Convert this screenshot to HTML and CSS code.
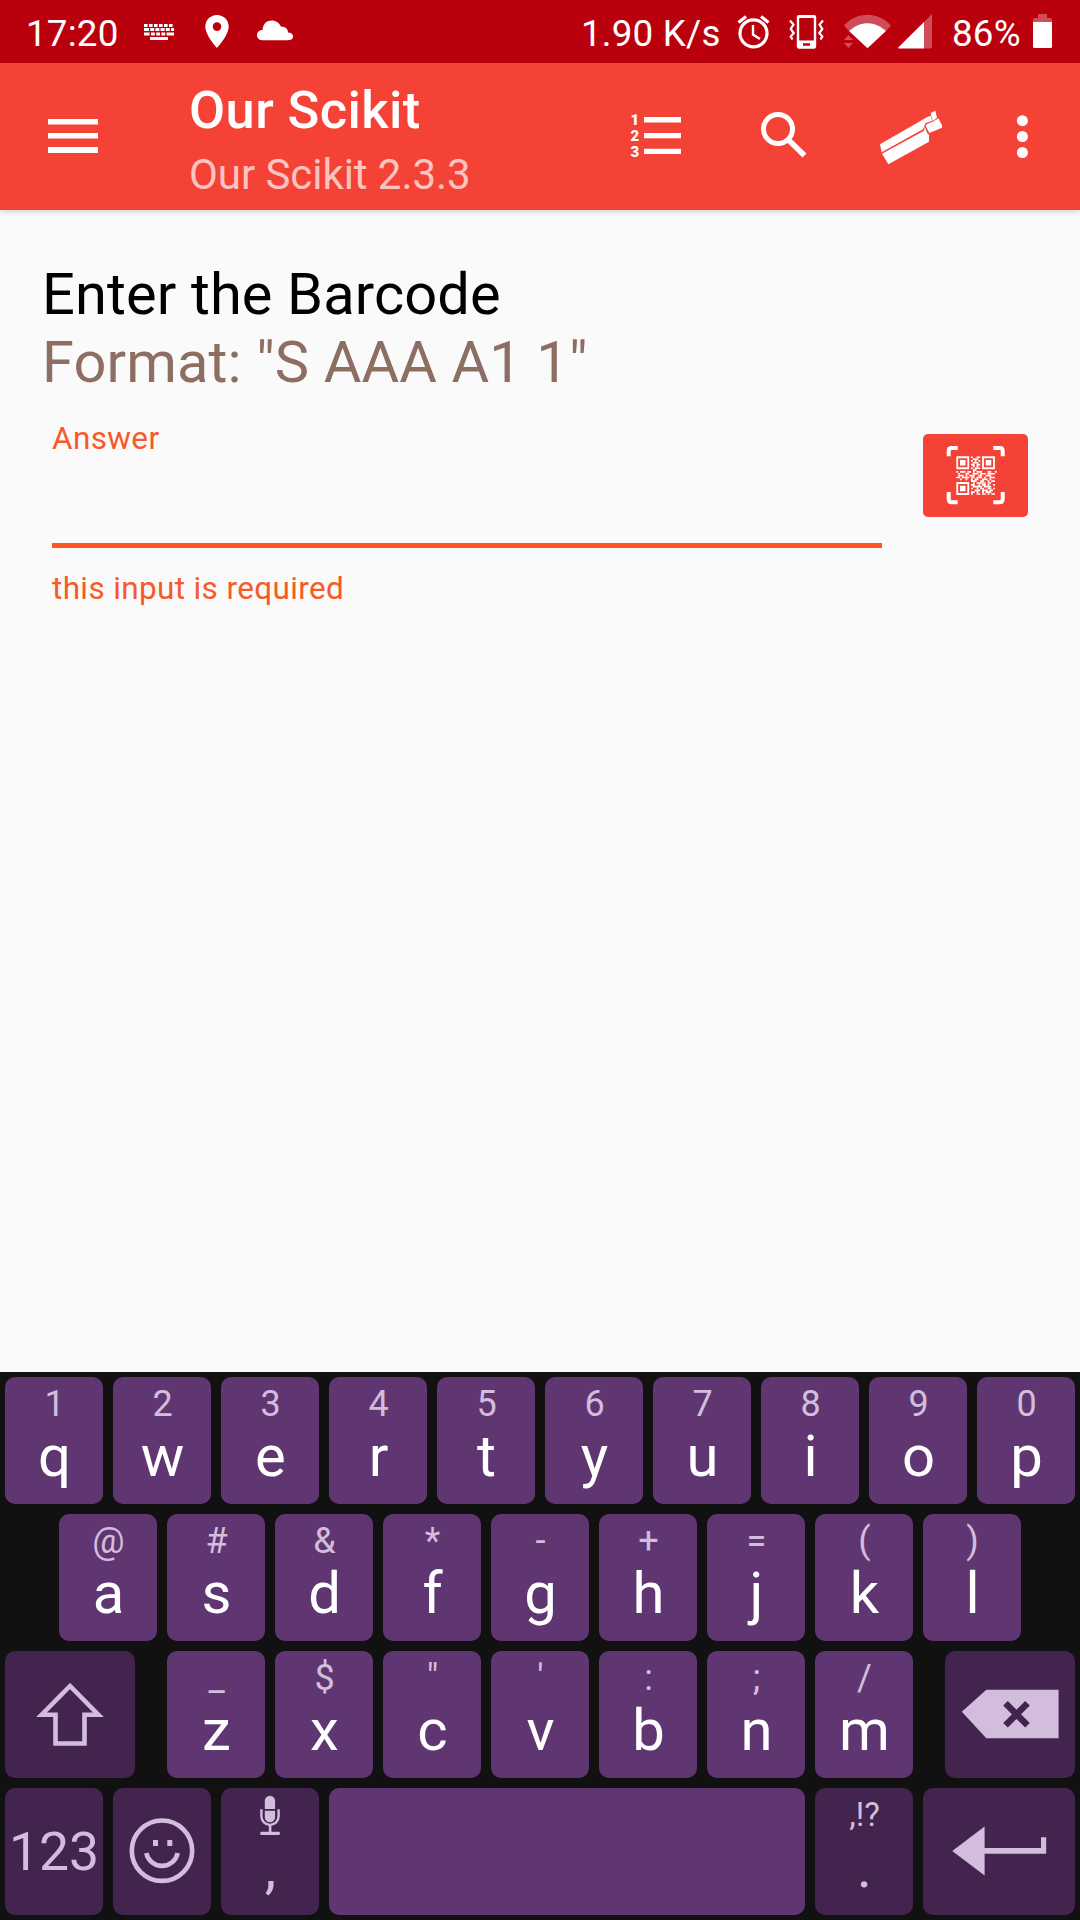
FILE: index.html
```html
<!DOCTYPE html>
<html lang="en">
<head>
<meta charset="utf-8">
<title>Our Scikit</title>
<link rel="stylesheet" href="styles.css">
</head>
<body>
<header class="status-bar">
  <div class="status-group">
    <span class="status-text clock">17:20</span>
    <svg class="ic-keyboard" width="30" height="63" viewBox="144 0 30 63"><path stroke="#fff" stroke-width="3" stroke-dasharray="3.6 1.4" d="M144 25.5h30"/><path stroke="#fff" stroke-width="3" stroke-dasharray="5 1.2 4 1.2 4 1.2 4 1.2 4 1.2 5" d="M144 29.6h30"/><path stroke="#fff" stroke-width="3" stroke-dasharray="5.6 1.4 3.8 1.4 3.8 1.4 3.8 1.4 9" d="M144 34h30"/><path fill="#fff" d="M150 37h18v3h-18z"/></svg>
    <svg class="ic-pin" width="24" height="63" viewBox="205 0 24 63"><path fill="#fff" fill-rule="evenodd" d="M217 15c-6.600 0-11.700 5.100-11.700 11.600C205.300 35.500 217 48 217 48s11.700-12.500 11.700-21.400C228.700 20.100 223.600 15 217 15zm0 7.300a4.300 4.300 0 1 1 0 8.600 4.300 4.300 0 0 1 0-8.600z"/></svg>
    <svg class="ic-cloud" width="36" height="63" viewBox="257 0 36 63"><path fill="#fff" d="M262.500 40.300c-7.600-.5-7.400-10 .2-10.500 0-11 14.500-12.600 18.300-3 4-.5 7 2 7 5.700 7 .4 6.800 7.800-.5 7.800z"/></svg>
  </div>
  <div class="status-group">
    <span class="status-text speed">1.90 K/s</span>
    <svg class="ic-alarm" width="33" height="63" viewBox="737 0 33 63"><g fill="none" stroke="#fff" stroke-width="3.200"><circle cx="753.500" cy="33.300" r="13.500"/><path d="M738.500 22.500l7.500-6M768.500 22.500l-7.500-6"/><path stroke-width="2.400" d="M753 25v9.500l7 4.500"/></g></svg>
    <svg class="ic-vibrate" width="35" height="63" viewBox="789 0 35 63"><path fill="#fff" fill-rule="evenodd" d="M799 15h15q2.200 0 2.200 2.200v29.300q0 2.200-2.200 2.200h-15q-2.200 0-2.200-2.200V17.200Q796.800 15 799 15zm.2 3v22.500h14.600V18zm3.800 25.300v2.400h7v-2.400z"/><path fill="none" stroke="#fff" stroke-width="2.200" d="M790 20.500l3.500 4-2.800 4.500 3 4-3 3.500 1.800 3M823 20.500l-3.500 4 2.800 4.500-3 4 3 3.500-1.800 3"/></svg>
    <svg class="ic-wifi" width="47" height="63" viewBox="844 0 47 63"><path class="dim" d="M844 25.500c13-14.300 34-14.300 47 0l-4.800 5.500c-11-10.500-26.400-10.500-37.400 0zM844 40l4.500-5 4.500 5zM844 43h9l-4.500 5z"/><path fill="#fff" d="M849 31c11-10.500 26-10.500 37 0l-18.500 17.300z"/></svg>
    <svg class="ic-signal" width="34" height="63" viewBox="898 0 34 63"><path class="dim" d="M924 22l8-8v32.500q0 2-2 2h-6z"/><path fill="#fff" d="M924 22v26.500h-25q-1.500 0-.5-1.200z"/></svg>
    <span class="status-text percent">86%</span>
    <svg class="ic-battery" width="19" height="63" viewBox="1033 0 19 63"><path class="dim" d="M1033 22v-2q0-2 2-2h3v-4h9v4h3q2 0 2 2v2z"/><path fill="#fff" d="M1033 22h19v24.500q0 1.500-1.500 1.500h-16q-1.500 0-1.500-1.500z"/></svg>
  </div>
</header>

<div class="app-bar">
  <svg class="menu" width="50" height="34" viewBox="0 0 50 34"><path fill="#fff" d="M0 0h50v5.500H0zM0 14h50v5.500H0zM0 28h50v6H0z"/></svg>
  <div class="titles">
    <div class="title">Our Scikit</div>
    <div class="subtitle">Our Scikit 2.3.3</div>
  </div>
  <div class="actions">
    <svg class="list" width="52" height="48" viewBox="630 112 52 48"><path fill="#fff" d="M644 117h37v5.500h-37zM644 133h37v5.300h-37zM644 148.700h37v5.300h-37z"/><g class="list-digits"><text x="630.500" y="125">1</text><text x="630.500" y="141">2</text><text x="630.500" y="157">3</text></g></svg>
    <svg class="search" width="48" height="48" viewBox="760 111 48 48"><g fill="none" stroke="#fff"><circle cx="778" cy="129" r="14.500" stroke-width="5"/><path stroke-width="5.500" d="M787.500 139l17 16.500"/></g></svg>
    <svg class="torch" width="90" height="64" viewBox="0 0 270 192"><g fill="#fff"><path d="M30 121L172 39l11-4 3 16-19 6-8 19L35 145z"/><path d="M36 149L162 80l2-12 8 20 5 5v20L55 181z"/><path d="M171 60l17-7 18-10 10 21v7l-38 16-11-21z"/><path d="M182 27l14-7 5 22-13 9z"/></g><path fill="none" stroke="#f44336" stroke-width="3" d="M203 34l12 24"/></svg>
    <svg class="more" width="12" height="48" viewBox="0 0 12 48"><g fill="#fff"><circle cx="6.400" cy="8.700" r="5.500"/><circle cx="6.400" cy="24.500" r="5.500"/><circle cx="6.400" cy="40.500" r="5.500"/></g></svg>
  </div>
</div>

<main class="content">
  <div class="prompt">Enter the Barcode</div>
  <div class="prompt format">Format: "S AAA A1 1"</div>
  <div class="answer-row">
    <div class="field">
      <div class="field-text">Answer</div>
      <div class="field-input"></div>
      <div class="field-text">this input is required</div>
    </div>
    <div class="scan">
      <svg width="105" height="83" viewBox="923 434 105 83">
        <path fill="none" stroke="#fff" stroke-width="4" d="M948.700 456.300V451q0-3 3-3h6M993.300 448h6.400q3 0 3 3v5.300M948.700 492v7.300q0 3 3 3h6M993.300 502.300h6.400q3 0 3-3V492"/>
        <g transform="translate(956.300 456.300) scale(1.840)" fill="none" stroke="#fff">
          <path stroke-width="1" d="M.5.500h6v6h-6zM14.500.500h6v6h-6zM.5 14.500h6v6h-6z"/>
          <path fill="#fff" stroke="none" d="M2 2h3v3H2zM16 2h3v3h-3zM2 16h3v3H2z"/>
          <path stroke-width=".9" d="M8 .5h1m2 0h2M9 1.500h3M8 2.500h1m1 0h1m1 0h1M9 3.500h3M8 4.500h2m1 0h2M9 5.500h1m1 0h1M8 6.500h1m1 0h3M9 7.500h2M0 8.500h1m1 0h3m1 0h2m1 0h1m1 0h3m3 0h2m2 0h1M1 9.500h1m3 0h2m2 0h3m1 0h3m1 0h4M1 10.500h3m1 0h1m1 0h3m2 0h2m2 0h3M0 11.500h2m1 0h4m1 0h2m1 0h3m1 0h1m2 0h3M2 12.500h1m2 0h1m2 0h1m1 0h2m2 0h3m1 0h1M8 13.500h3m2 0h2m2 0h1m1 0h2M9 14.500h1m1 0h5m1 0h2M8 15.500h2m2 0h1m1 0h2m1 0h1m2 0h1M9 16.500h5m1 0h4M8 17.500h1m2 0h1m1 0h2m2 0h2m1 0h1M10 18.500h3m1 0h3m1 0h2M8 19.500h2m1 0h1m2 0h1m1 0h3M8 20.500h1m2 0h2m1 0h2m1 0h1m1 0h2"/>
        </g>
      </svg>
    </div>
  </div>
</main>

<section class="keyboard">
  <div class="row">
    <div class="key"><span class="hint">1</span><span class="main">q</span></div>
    <div class="key"><span class="hint">2</span><span class="main">w</span></div>
    <div class="key"><span class="hint">3</span><span class="main">e</span></div>
    <div class="key"><span class="hint">4</span><span class="main">r</span></div>
    <div class="key"><span class="hint">5</span><span class="main">t</span></div>
    <div class="key"><span class="hint">6</span><span class="main">y</span></div>
    <div class="key"><span class="hint">7</span><span class="main">u</span></div>
    <div class="key"><span class="hint">8</span><span class="main">i</span></div>
    <div class="key"><span class="hint">9</span><span class="main">o</span></div>
    <div class="key"><span class="hint">0</span><span class="main">p</span></div>
  </div>
  <div class="row">
    <div class="key"><span class="hint">@</span><span class="main">a</span></div>
    <div class="key"><span class="hint">#</span><span class="main">s</span></div>
    <div class="key"><span class="hint">&amp;</span><span class="main">d</span></div>
    <div class="key"><span class="hint">*</span><span class="main">f</span></div>
    <div class="key"><span class="hint">-</span><span class="main">g</span></div>
    <div class="key"><span class="hint">+</span><span class="main">h</span></div>
    <div class="key"><span class="hint">=</span><span class="main">j</span></div>
    <div class="key"><span class="hint">(</span><span class="main">k</span></div>
    <div class="key"><span class="hint">)</span><span class="main">l</span></div>
  </div>
  <div class="row spread">
    <div class="key dark shift"><svg width="130" height="127" viewBox="5 1651 130 127"><path fill="none" stroke="#d2bddc" stroke-width="4.600" d="M70 1686l-28.300 28.700h13.800v28.800h29v-28.800h13.800z"/></svg></div>
    <div class="letters">
      <div class="key"><span class="hint">_</span><span class="main">z</span></div>
      <div class="key"><span class="hint">$</span><span class="main">x</span></div>
      <div class="key"><span class="hint">"</span><span class="main">c</span></div>
      <div class="key"><span class="hint">'</span><span class="main">v</span></div>
      <div class="key"><span class="hint">:</span><span class="main">b</span></div>
      <div class="key"><span class="hint">;</span><span class="main">n</span></div>
      <div class="key"><span class="hint">/</span><span class="main">m</span></div>
    </div>
    <div class="key dark shift"><svg width="130" height="127" viewBox="945 1651 130 127"><path fill="#d2bddc" d="M961.800 1711.700l24.500-22h72.300v48.600h-72.300z"/><path stroke="#42244e" stroke-width="6.500" d="M1005.500 1703.300l22 22M1027.500 1703.300l-22 22"/></svg></div>
  </div>
  <div class="row">
    <div class="key dark"><span class="numeric">123</span></div>
    <div class="key dark"><svg width="98" height="127" viewBox="113 1788 98 127"><g fill="none" stroke="#d2bddc" stroke-width="4.600"><circle cx="162" cy="1850.700" r="30.200"/><path d="M146.300 1853a16 16 0 0 0 31.400 0"/></g><path fill="#d2bddc" d="M153 1840h5v6h-5zM167.300 1840h5v6h-5z"/></svg></div>
    <div class="key dark"><svg width="98" height="54" viewBox="221 1788 98 54"><path fill="#d2bddc" d="M264.800 1809v-8a5.150 5.150 0 0 1 10.300 0v8zM264.800 1810.700h10.300v6.500a5.150 5.150 0 0 1-10.300 0zM268.800 1825h2.600v7h-2.600z"/><path fill="none" stroke="#d2bddc" stroke-width="2.400" d="M261.400 1809.300v7a8.600 8.600 0 0 0 17.200 0v-7"/><rect x="260.300" y="1831.700" width="19.600" height="3.300" rx="1" fill="#d2bddc"/></svg><span class="main">,</span></div>
    <div class="key space"></div>
    <div class="key dark"><span class="hint punct">,!?</span><span class="main">.</span></div>
    <div class="key dark enter"><svg width="152" height="127" viewBox="923 1788 152 127"><path fill="#d2bddc" d="M952.200 1851l32.400-24.500v21.500h56.400v-10.700h5.200v16.400h-61.600v21.800z"/></svg></div>
  </div>
</section>
</body>
</html>
```
FILE: styles.css
```css
* {
  box-sizing: border-box;
}

body {
  margin: 0;
  width: 1080px;
  height: 1920px;
  display: flex;
  flex-direction: column;
  background: #fafafa;
  font-family: Roboto, sans-serif;
  overflow: hidden;
}

svg {
  display: block;
  flex: none;
}

/* Status bar */
.status-bar {
  height: 63px;
  flex: none;
  display: flex;
  justify-content: space-between;
  padding: 0 28px 0 26px;
  background: #ba000d;
  color: #fff;
}

.status-group {
  display: flex;
}

.status-text {
  font-size: 36.75px;
  line-height: 67px;
  height: 63px;
  letter-spacing: 0.2px;
  white-space: nowrap;
}

.dim {
  fill: #fff;
  fill-opacity: 0.3;
}

.clock { width: 93px; }
.speed { width: 140px; }
.percent { width: 69px; margin-left: 20px; }
.ic-keyboard { margin-left: 25px; }
.ic-pin { margin-left: 31px; }
.ic-cloud { margin-left: 28px; }
.ic-alarm { margin-left: 16px; }
.ic-vibrate { margin-left: 19px; }
.ic-wifi { margin-left: 20px; }
.ic-signal { margin-left: 7px; }
.ic-battery { margin-left: 12px; }

/* App bar */
.app-bar {
  height: 147px;
  flex: none;
  display: flex;
  padding: 0 52px 0 48px;
  background: #f44336;
  color: #fff;
  box-shadow: 0 2px 6px rgba(0, 0, 0, 0.16);
}

.menu {
  margin-top: 56px;
}

.titles {
  margin-left: 91px;
  padding-top: 15px;
  flex: 1;
}

.title {
  font-size: 52.5px;
  font-weight: 500;
  line-height: 64px;
  letter-spacing: 0.38px;
}

.subtitle {
  font-size: 42px;
  line-height: 66px;
  letter-spacing: -0.06px;
  color: rgba(255, 255, 255, 0.7);
}

.actions {
  display: flex;
  align-items: flex-start;
}

.list { margin-top: 49px; }
.search { margin: 48px 0 0 78px; }
.torch { margin: 41px 0 0 62px; }
.more { margin: 49px 0 0 56px; }

.list-digits {
  font-size: 15px;
  font-weight: 900;
  fill: #fff;
}

/* Form */
.content {
  flex: 1;
  padding: 50px 52px 0 42px;
}

.prompt {
  font-size: 57.75px;
  line-height: 68px;
  letter-spacing: 0.13px;
  color: #000;
}

.format {
  color: #8d6e63;
}

.answer-row {
  display: flex;
  justify-content: space-between;
  align-items: flex-start;
  padding-left: 10px;
}

.field {
  width: 830px;
  padding-top: 23px;
}

.field-text {
  font-size: 31.5px;
  line-height: 40px;
  letter-spacing: 0.36px;
  color: #f65a28;
}

.field-input {
  height: 89px;
  margin-bottom: 21px;
  border-bottom: 5px solid #ff5722;
}

.scan {
  margin-top: 38px;
  border-radius: 5px;
  background: #f44336;
}

/* Keyboard */
.keyboard {
  height: 548px;
  flex: none;
  display: flex;
  flex-direction: column;
  gap: 10px;
  padding: 5px;
  background: #111;
}

.row {
  display: flex;
  justify-content: center;
  gap: 10px;
  height: 127px;
}

.spread {
  justify-content: space-between;
}

.letters {
  display: flex;
  gap: 10px;
}

.key {
  width: 98px;
  height: 127px;
  display: flex;
  flex-direction: column;
  align-items: center;
  border-radius: 10px;
  background: #603672;
  color: #fff;
}

.dark {
  background: #42244e;
  color: #d2bddc;
}

.shift { width: 130px; }
.space { width: 476px; }
.enter { width: 152px; }

.hint {
  font-size: 36px;
  line-height: 54px;
  padding-left: 1px;
  color: #d2bddc;
}

.punct {
  font-size: 33px;
}

.main {
  font-size: 58px;
  line-height: 50px;
  padding-left: 1px;
}

.numeric {
  font-size: 53.5px;
  line-height: 127px;
}
```
